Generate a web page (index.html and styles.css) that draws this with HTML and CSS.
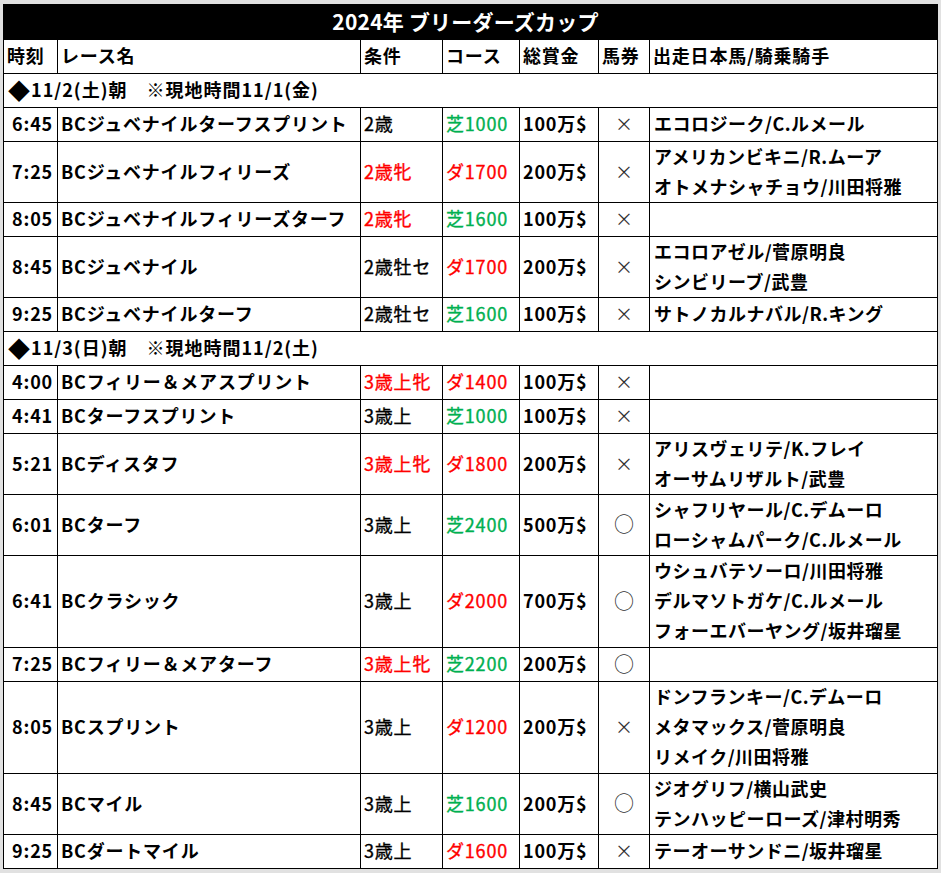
FILE: index.html
```html
<!DOCTYPE html>
<html lang="ja">
<head>
<meta charset="utf-8">
<title>2024年 ブリーダーズカップ</title>
<link rel="stylesheet" href="styles.css">
</head>
<body>
<div class="sheet">
  <div class="title">2024年 ブリーダーズカップ</div>

  <div class="row head">
    <div class="c">時刻</div>
    <div class="c">レース名</div>
    <div class="c">条件</div>
    <div class="c">コース</div>
    <div class="c">総賞金</div>
    <div class="c">馬券</div>
    <div class="c">出走日本馬/騎乗騎手</div>
  </div>

  <div class="row section"><div class="c"><span class="dia">◆</span>11/2(土)朝　※現地時間11/1(金)</div></div>

  <div class="row">
    <div class="c t">6:45</div><div class="c">BCジュベナイルターフスプリント</div>
    <div class="c reg">2歳</div><div class="c reg green">芝1000</div>
    <div class="c">100万$</div><div class="c x">×</div>
    <div class="c j"><span>エコロジーク/C.ルメール</span></div>
  </div>
  <div class="row l2">
    <div class="c t">7:25</div><div class="c">BCジュベナイルフィリーズ</div>
    <div class="c reg red">2歳牝</div><div class="c reg red">ダ1700</div>
    <div class="c">200万$</div><div class="c x">×</div>
    <div class="c j"><span>アメリカンビキニ/R.ムーア</span><span>オトメナシャチョウ/川田将雅</span></div>
  </div>
  <div class="row">
    <div class="c t">8:05</div><div class="c">BCジュベナイルフィリーズターフ</div>
    <div class="c reg red">2歳牝</div><div class="c reg green">芝1600</div>
    <div class="c">100万$</div><div class="c x">×</div>
    <div class="c j"></div>
  </div>
  <div class="row l2">
    <div class="c t">8:45</div><div class="c">BCジュベナイル</div>
    <div class="c reg">2歳牡セ</div><div class="c reg red">ダ1700</div>
    <div class="c">200万$</div><div class="c x">×</div>
    <div class="c j"><span>エコロアゼル/菅原明良</span><span>シンビリーブ/武豊</span></div>
  </div>
  <div class="row">
    <div class="c t">9:25</div><div class="c">BCジュベナイルターフ</div>
    <div class="c reg">2歳牡セ</div><div class="c reg green">芝1600</div>
    <div class="c">100万$</div><div class="c x">×</div>
    <div class="c j"><span>サトノカルナバル/R.キング</span></div>
  </div>

  <div class="row section"><div class="c"><span class="dia">◆</span>11/3(日)朝　※現地時間11/2(土)</div></div>

  <div class="row">
    <div class="c t">4:00</div><div class="c">BCフィリー＆メアスプリント</div>
    <div class="c reg red">3歳上牝</div><div class="c reg red">ダ1400</div>
    <div class="c">100万$</div><div class="c x">×</div>
    <div class="c j"></div>
  </div>
  <div class="row">
    <div class="c t">4:41</div><div class="c">BCターフスプリント</div>
    <div class="c reg">3歳上</div><div class="c reg green">芝1000</div>
    <div class="c">100万$</div><div class="c x">×</div>
    <div class="c j"></div>
  </div>
  <div class="row l2">
    <div class="c t">5:21</div><div class="c">BCディスタフ</div>
    <div class="c reg red">3歳上牝</div><div class="c reg red">ダ1800</div>
    <div class="c">200万$</div><div class="c x">×</div>
    <div class="c j"><span>アリスヴェリテ/K.フレイ</span><span>オーサムリザルト/武豊</span></div>
  </div>
  <div class="row l2">
    <div class="c t">6:01</div><div class="c">BCターフ</div>
    <div class="c reg">3歳上</div><div class="c reg green">芝2400</div>
    <div class="c">500万$</div><div class="c x o">○</div>
    <div class="c j"><span>シャフリヤール/C.デムーロ</span><span>ローシャムパーク/C.ルメール</span></div>
  </div>
  <div class="row l3">
    <div class="c t">6:41</div><div class="c">BCクラシック</div>
    <div class="c reg">3歳上</div><div class="c reg red">ダ2000</div>
    <div class="c">700万$</div><div class="c x o">○</div>
    <div class="c j"><span>ウシュバテソーロ/川田将雅</span><span>デルマソトガケ/C.ルメール</span><span>フォーエバーヤング/坂井瑠星</span></div>
  </div>
  <div class="row">
    <div class="c t">7:25</div><div class="c">BCフィリー＆メアターフ</div>
    <div class="c reg red">3歳上牝</div><div class="c reg green">芝2200</div>
    <div class="c">200万$</div><div class="c x o">○</div>
    <div class="c j"></div>
  </div>
  <div class="row l3">
    <div class="c t">8:05</div><div class="c">BCスプリント</div>
    <div class="c reg">3歳上</div><div class="c reg red">ダ1200</div>
    <div class="c">200万$</div><div class="c x">×</div>
    <div class="c j"><span>ドンフランキー/C.デムーロ</span><span>メタマックス/菅原明良</span><span>リメイク/川田将雅</span></div>
  </div>
  <div class="row l2">
    <div class="c t">8:45</div><div class="c">BCマイル</div>
    <div class="c reg">3歳上</div><div class="c reg green">芝1600</div>
    <div class="c">200万$</div><div class="c x o">○</div>
    <div class="c j"><span>ジオグリフ/横山武史</span><span>テンハッピーローズ/津村明秀</span></div>
  </div>
  <div class="row">
    <div class="c t">9:25</div><div class="c">BCダートマイル</div>
    <div class="c reg">3歳上</div><div class="c reg red">ダ1600</div>
    <div class="c">100万$</div><div class="c x">×</div>
    <div class="c j"><span>テーオーサンドニ/坂井瑠星</span></div>
  </div>
</div>
</body>
</html>
```

FILE: styles.css
```css
html, body {
  margin: 0;
  padding: 0;
  background: #e1e1e1;
}

body {
  padding: 4px 0 0 3px;
  font-family: "Noto Sans CJK JP", "Noto Sans", sans-serif;
  color: #000;
}

.sheet {
  width: 933px;
  background: #000;
  padding: 1px;
  display: flex;
  flex-direction: column;
  gap: 1px;
}

.title {
  height: 34px;
  line-height: 32px;
  color: #fff;
  font-size: 21px;
  font-weight: 700;
  text-align: center;
  padding-right: 10px;
  letter-spacing: 0.2px;
}

.row {
  display: grid;
  grid-template-columns: 53px 302px 81px 76px 78px 50px 287px;
  column-gap: 1px;
  height: 33px;
}

.row.l2 { height: 60px; }
.row.l3 { height: 91px; }

.row.section {
  grid-template-columns: 1fr;
}

.c {
  background: #fff;
  display: flex;
  align-items: center;
  padding: 0 3px 3px;
  font-size: 18px;
  font-weight: 700;
  white-space: nowrap;
  overflow: hidden;
  letter-spacing: 0.8px;
}

.section .c {
  padding-left: 4px;
  letter-spacing: 1px;
}

.section .dia {
  font-size: 22px;
  letter-spacing: 0;
  margin-right: 1px;
}

.c.t {
  justify-content: flex-end;
  padding-right: 4px;
  letter-spacing: 0.8px;
}

.c.reg {
  font-weight: 400;
  -webkit-text-stroke: 0.35px currentColor;
}

.c.red { color: #ff0000; }
.c.green { color: #00b050; }

.c.x {
  justify-content: center;
  font-weight: 400;
  color: #333;
  font-size: 18px;
  letter-spacing: 0;
}

.c.x.o {
  font-size: 20px;
}

.c.j {
  flex-direction: column;
  align-items: flex-start;
  justify-content: center;
  padding-left: 4px;
  letter-spacing: 0.5px;
}

.c.j span {
  display: block;
  line-height: 30px;
}
```
